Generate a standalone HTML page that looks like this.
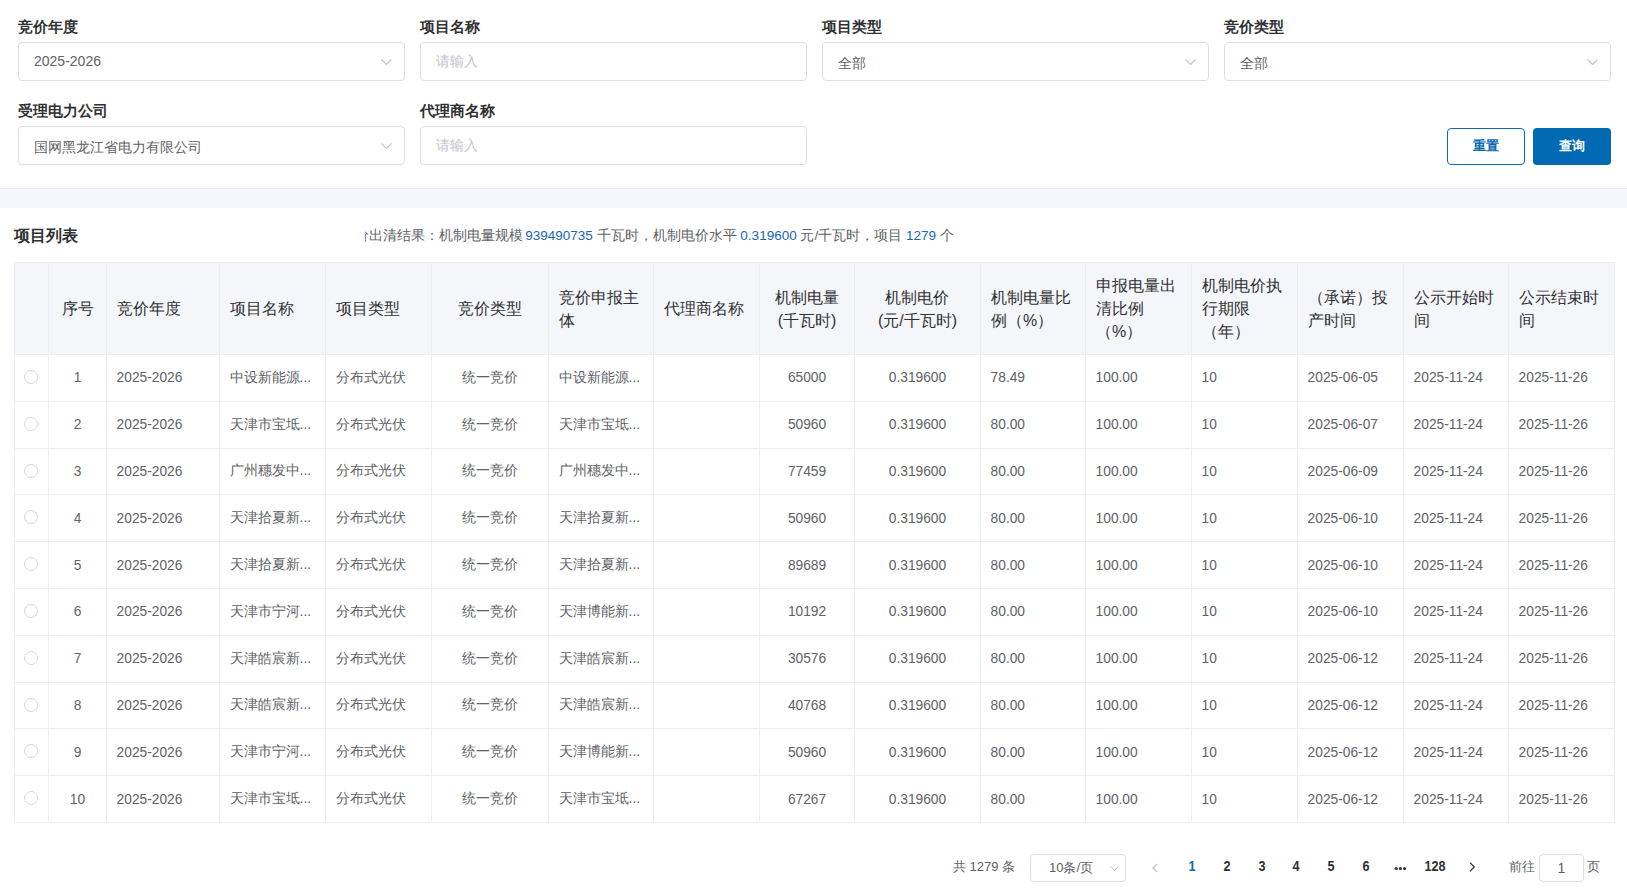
<!DOCTYPE html><html><head><meta charset="utf-8"><style>
*{box-sizing:border-box}
html,body{margin:0;padding:0;background:#fff;width:1627px;height:890px;overflow:hidden}
body{font-family:"Liberation Sans",sans-serif;color:#606266;position:relative}
.abs{position:absolute}
.lbl{position:absolute;font-size:14.5px;font-weight:bold;color:#303133;line-height:20px;white-space:nowrap}
.box{position:absolute;border:1px solid #dcdfe6;border-radius:4px;background:#fff;height:39px;width:387px}
.box .t{position:absolute;left:15px;top:0;line-height:37px;font-size:14px;color:#606266;white-space:nowrap}
.box .ph{color:#c0c4cc}
.box .cj{top:2px;font-size:13.6px}
.arrow{position:absolute;left:362.2px;top:16.4px;width:11px;height:6px}
.btn{position:absolute;top:128px;height:37px;width:78px;border-radius:4px;font-size:13.3px;font-weight:bold;text-align:center;line-height:33px}
.strip{position:absolute;left:0;top:188px;width:1627px;height:20px;background:#f4f7fc;border-top:1px solid #e8eff8}
.title{position:absolute;left:14px;top:226px;font-size:16px;font-weight:bold;color:#303133;line-height:20px}
.sumwrap{position:absolute;left:365px;top:227px;width:1000px;height:20px;overflow:hidden}
.sum{position:absolute;left:-24px;top:0;font-size:13.5px;line-height:18px;color:#606266;white-space:nowrap}
.sum b{font-weight:normal;color:#1c65b0}
.tbl{position:absolute;left:0;top:0}
.hbg{position:absolute;background:#f5f6fa}
.vl{position:absolute;width:1px;background:#ebeef5}
.hl{position:absolute;height:1px;background:#ebeef5}
.cell{position:absolute;display:flex;align-items:center;overflow:hidden}
.cell.c{justify-content:center;text-align:center}
.cell.l{justify-content:flex-start;text-align:left}
.hd{font-size:16px;color:#303133;line-height:23px}
.bd{font-size:13.75px;color:#606266;white-space:nowrap}
.radio{position:absolute;width:14px;height:14px;border:1px solid #d5d8df;border-radius:50%;background:#fff}
.pg{position:absolute;top:853px;font-size:13px;line-height:26px;white-space:nowrap}
</style></head><body>
<div class="lbl" style="left:18px;top:17px">竞价年度</div>
<div class="lbl" style="left:420px;top:17px">项目名称</div>
<div class="lbl" style="left:822px;top:17px">项目类型</div>
<div class="lbl" style="left:1224px;top:17px">竞价类型</div>
<div class="box" style="left:18px;top:42px"><span class="t">2025-2026</span><svg class="arrow" viewBox="0 0 11 6"><path d="M0.5 0.5 L5.5 5.5 L10.5 0.5" fill="none" stroke="#c0c4cc" stroke-width="1.1"/></svg></div>
<div class="box" style="left:420px;top:42px"><span class="t ph">请输入</span></div>
<div class="box" style="left:822px;top:42px"><span class="t cj">全部</span><svg class="arrow" viewBox="0 0 11 6"><path d="M0.5 0.5 L5.5 5.5 L10.5 0.5" fill="none" stroke="#c0c4cc" stroke-width="1.1"/></svg></div>
<div class="box" style="left:1224px;top:42px"><span class="t cj">全部</span><svg class="arrow" viewBox="0 0 11 6"><path d="M0.5 0.5 L5.5 5.5 L10.5 0.5" fill="none" stroke="#c0c4cc" stroke-width="1.1"/></svg></div>
<div class="lbl" style="left:18px;top:101px">受理电力公司</div>
<div class="lbl" style="left:420px;top:101px">代理商名称</div>
<div class="box" style="left:18px;top:126px"><span class="t cj">国网黑龙江省电力有限公司</span><svg class="arrow" viewBox="0 0 11 6"><path d="M0.5 0.5 L5.5 5.5 L10.5 0.5" fill="none" stroke="#c0c4cc" stroke-width="1.1"/></svg></div>
<div class="box" style="left:420px;top:126px"><span class="t ph">请输入</span></div>
<div class="btn" style="left:1447px;border:1px solid #0a6ab3;color:#0a6ab3;background:#fff">重置</div>
<div class="btn" style="left:1533px;background:#016ab3;color:#fff;line-height:35px">查询</div>
<div class="strip"></div>
<div class="title">项目列表</div>
<div class="sumwrap"><div class="sum"><span style="word-spacing:-1.5px">竞价出清结果：机制电量规模 </span><b>939490735</b> 千瓦时，机制电价水平 <b>0.319600</b> 元/千瓦时，项目 <b>1279</b> 个</div></div>
<div class="hbg" style="left:14px;top:262px;width:1600px;height:92px"></div>
<div class="hl" style="left:14px;top:262.00px;width:1601px"></div>
<div class="hl" style="left:14px;top:354.00px;width:1601px"></div>
<div class="hl" style="left:14px;top:400.80px;width:1601px"></div>
<div class="hl" style="left:14px;top:447.60px;width:1601px"></div>
<div class="hl" style="left:14px;top:494.40px;width:1601px"></div>
<div class="hl" style="left:14px;top:541.20px;width:1601px"></div>
<div class="hl" style="left:14px;top:588.00px;width:1601px"></div>
<div class="hl" style="left:14px;top:634.80px;width:1601px"></div>
<div class="hl" style="left:14px;top:681.60px;width:1601px"></div>
<div class="hl" style="left:14px;top:728.40px;width:1601px"></div>
<div class="hl" style="left:14px;top:775.20px;width:1601px"></div>
<div class="hl" style="left:14px;top:822.00px;width:1601px"></div>
<div class="vl" style="left:14px;top:262px;height:561.00px"></div>
<div class="vl" style="left:48px;top:262px;height:561.00px"></div>
<div class="vl" style="left:106px;top:262px;height:561.00px"></div>
<div class="vl" style="left:219px;top:262px;height:561.00px"></div>
<div class="vl" style="left:325px;top:262px;height:561.00px"></div>
<div class="vl" style="left:431px;top:262px;height:561.00px"></div>
<div class="vl" style="left:548px;top:262px;height:561.00px"></div>
<div class="vl" style="left:653px;top:262px;height:561.00px"></div>
<div class="vl" style="left:759px;top:262px;height:561.00px"></div>
<div class="vl" style="left:854px;top:262px;height:561.00px"></div>
<div class="vl" style="left:980px;top:262px;height:561.00px"></div>
<div class="vl" style="left:1085px;top:262px;height:561.00px"></div>
<div class="vl" style="left:1191px;top:262px;height:561.00px"></div>
<div class="vl" style="left:1297px;top:262px;height:561.00px"></div>
<div class="vl" style="left:1403px;top:262px;height:561.00px"></div>
<div class="vl" style="left:1508px;top:262px;height:561.00px"></div>
<div class="vl" style="left:1614px;top:262px;height:561.00px"></div>
<div class="cell hd c" style="left:15px;top:263px;width:33px;height:91px;padding:0 4px"><div></div></div>
<div class="cell hd c" style="left:49px;top:263px;width:57px;height:91px;padding:0 4px"><div>序号</div></div>
<div class="cell hd l" style="left:107px;top:263px;width:112px;height:91px;padding:0 10px"><div>竞价年度</div></div>
<div class="cell hd l" style="left:220px;top:263px;width:105px;height:91px;padding:0 10px"><div>项目名称</div></div>
<div class="cell hd l" style="left:326px;top:263px;width:105px;height:91px;padding:0 10px"><div>项目类型</div></div>
<div class="cell hd c" style="left:432px;top:263px;width:116px;height:91px;padding:0 4px"><div>竞价类型</div></div>
<div class="cell hd l" style="left:549px;top:263px;width:104px;height:91px;padding:0 10px"><div>竞价申报主体</div></div>
<div class="cell hd l" style="left:654px;top:263px;width:105px;height:91px;padding:0 10px"><div>代理商名称</div></div>
<div class="cell hd c" style="left:760px;top:263px;width:94px;height:91px;padding:0 4px"><div>机制电量<br>(千瓦时)</div></div>
<div class="cell hd c" style="left:855px;top:263px;width:125px;height:91px;padding:0 4px"><div>机制电价<br>(元/千瓦时)</div></div>
<div class="cell hd l" style="left:981px;top:263px;width:104px;height:91px;padding:0 10px"><div>机制电量比例（%）</div></div>
<div class="cell hd l" style="left:1086px;top:263px;width:105px;height:91px;padding:0 10px"><div>申报电量出清比例（%）</div></div>
<div class="cell hd l" style="left:1192px;top:263px;width:105px;height:91px;padding:0 10px"><div>机制电价执行期限（年）</div></div>
<div class="cell hd l" style="left:1298px;top:263px;width:105px;height:91px;padding:0 10px"><div>（承诺）投产时间</div></div>
<div class="cell hd l" style="left:1404px;top:263px;width:104px;height:91px;padding:0 10px"><div>公示开始时间</div></div>
<div class="cell hd l" style="left:1509px;top:263px;width:105px;height:91px;padding:0 10px"><div>公示结束时间</div></div>
<div class="radio" style="left:24px;top:369.90px"></div>
<div class="cell bd c" style="left:49px;top:355.00px;width:57px;height:45.80px;padding:0 4px">1</div>
<div class="cell bd l" style="left:107px;top:355.00px;width:112px;height:45.80px;padding:0 9.6px">2025-2026</div>
<div class="cell bd l" style="left:220px;top:355.00px;width:105px;height:45.80px;padding:0 9.6px">中设新能源...</div>
<div class="cell bd l" style="left:326px;top:355.00px;width:105px;height:45.80px;padding:0 9.6px">分布式光伏</div>
<div class="cell bd c" style="left:432px;top:355.00px;width:116px;height:45.80px;padding:0 4px">统一竞价</div>
<div class="cell bd l" style="left:549px;top:355.00px;width:104px;height:45.80px;padding:0 9.6px">中设新能源...</div>
<div class="cell bd l" style="left:654px;top:355.00px;width:105px;height:45.80px;padding:0 9.6px"></div>
<div class="cell bd c" style="left:760px;top:355.00px;width:94px;height:45.80px;padding:0 4px">65000</div>
<div class="cell bd c" style="left:855px;top:355.00px;width:125px;height:45.80px;padding:0 4px">0.319600</div>
<div class="cell bd l" style="left:981px;top:355.00px;width:104px;height:45.80px;padding:0 9.6px">78.49</div>
<div class="cell bd l" style="left:1086px;top:355.00px;width:105px;height:45.80px;padding:0 9.6px">100.00</div>
<div class="cell bd l" style="left:1192px;top:355.00px;width:105px;height:45.80px;padding:0 9.6px">10</div>
<div class="cell bd l" style="left:1298px;top:355.00px;width:105px;height:45.80px;padding:0 9.6px">2025-06-05</div>
<div class="cell bd l" style="left:1404px;top:355.00px;width:104px;height:45.80px;padding:0 9.6px">2025-11-24</div>
<div class="cell bd l" style="left:1509px;top:355.00px;width:105px;height:45.80px;padding:0 9.6px">2025-11-26</div>
<div class="radio" style="left:24px;top:416.70px"></div>
<div class="cell bd c" style="left:49px;top:401.80px;width:57px;height:45.80px;padding:0 4px">2</div>
<div class="cell bd l" style="left:107px;top:401.80px;width:112px;height:45.80px;padding:0 9.6px">2025-2026</div>
<div class="cell bd l" style="left:220px;top:401.80px;width:105px;height:45.80px;padding:0 9.6px">天津市宝坻...</div>
<div class="cell bd l" style="left:326px;top:401.80px;width:105px;height:45.80px;padding:0 9.6px">分布式光伏</div>
<div class="cell bd c" style="left:432px;top:401.80px;width:116px;height:45.80px;padding:0 4px">统一竞价</div>
<div class="cell bd l" style="left:549px;top:401.80px;width:104px;height:45.80px;padding:0 9.6px">天津市宝坻...</div>
<div class="cell bd l" style="left:654px;top:401.80px;width:105px;height:45.80px;padding:0 9.6px"></div>
<div class="cell bd c" style="left:760px;top:401.80px;width:94px;height:45.80px;padding:0 4px">50960</div>
<div class="cell bd c" style="left:855px;top:401.80px;width:125px;height:45.80px;padding:0 4px">0.319600</div>
<div class="cell bd l" style="left:981px;top:401.80px;width:104px;height:45.80px;padding:0 9.6px">80.00</div>
<div class="cell bd l" style="left:1086px;top:401.80px;width:105px;height:45.80px;padding:0 9.6px">100.00</div>
<div class="cell bd l" style="left:1192px;top:401.80px;width:105px;height:45.80px;padding:0 9.6px">10</div>
<div class="cell bd l" style="left:1298px;top:401.80px;width:105px;height:45.80px;padding:0 9.6px">2025-06-07</div>
<div class="cell bd l" style="left:1404px;top:401.80px;width:104px;height:45.80px;padding:0 9.6px">2025-11-24</div>
<div class="cell bd l" style="left:1509px;top:401.80px;width:105px;height:45.80px;padding:0 9.6px">2025-11-26</div>
<div class="radio" style="left:24px;top:463.50px"></div>
<div class="cell bd c" style="left:49px;top:448.60px;width:57px;height:45.80px;padding:0 4px">3</div>
<div class="cell bd l" style="left:107px;top:448.60px;width:112px;height:45.80px;padding:0 9.6px">2025-2026</div>
<div class="cell bd l" style="left:220px;top:448.60px;width:105px;height:45.80px;padding:0 9.6px">广州穗发中...</div>
<div class="cell bd l" style="left:326px;top:448.60px;width:105px;height:45.80px;padding:0 9.6px">分布式光伏</div>
<div class="cell bd c" style="left:432px;top:448.60px;width:116px;height:45.80px;padding:0 4px">统一竞价</div>
<div class="cell bd l" style="left:549px;top:448.60px;width:104px;height:45.80px;padding:0 9.6px">广州穗发中...</div>
<div class="cell bd l" style="left:654px;top:448.60px;width:105px;height:45.80px;padding:0 9.6px"></div>
<div class="cell bd c" style="left:760px;top:448.60px;width:94px;height:45.80px;padding:0 4px">77459</div>
<div class="cell bd c" style="left:855px;top:448.60px;width:125px;height:45.80px;padding:0 4px">0.319600</div>
<div class="cell bd l" style="left:981px;top:448.60px;width:104px;height:45.80px;padding:0 9.6px">80.00</div>
<div class="cell bd l" style="left:1086px;top:448.60px;width:105px;height:45.80px;padding:0 9.6px">100.00</div>
<div class="cell bd l" style="left:1192px;top:448.60px;width:105px;height:45.80px;padding:0 9.6px">10</div>
<div class="cell bd l" style="left:1298px;top:448.60px;width:105px;height:45.80px;padding:0 9.6px">2025-06-09</div>
<div class="cell bd l" style="left:1404px;top:448.60px;width:104px;height:45.80px;padding:0 9.6px">2025-11-24</div>
<div class="cell bd l" style="left:1509px;top:448.60px;width:105px;height:45.80px;padding:0 9.6px">2025-11-26</div>
<div class="radio" style="left:24px;top:510.30px"></div>
<div class="cell bd c" style="left:49px;top:495.40px;width:57px;height:45.80px;padding:0 4px">4</div>
<div class="cell bd l" style="left:107px;top:495.40px;width:112px;height:45.80px;padding:0 9.6px">2025-2026</div>
<div class="cell bd l" style="left:220px;top:495.40px;width:105px;height:45.80px;padding:0 9.6px">天津拾夏新...</div>
<div class="cell bd l" style="left:326px;top:495.40px;width:105px;height:45.80px;padding:0 9.6px">分布式光伏</div>
<div class="cell bd c" style="left:432px;top:495.40px;width:116px;height:45.80px;padding:0 4px">统一竞价</div>
<div class="cell bd l" style="left:549px;top:495.40px;width:104px;height:45.80px;padding:0 9.6px">天津拾夏新...</div>
<div class="cell bd l" style="left:654px;top:495.40px;width:105px;height:45.80px;padding:0 9.6px"></div>
<div class="cell bd c" style="left:760px;top:495.40px;width:94px;height:45.80px;padding:0 4px">50960</div>
<div class="cell bd c" style="left:855px;top:495.40px;width:125px;height:45.80px;padding:0 4px">0.319600</div>
<div class="cell bd l" style="left:981px;top:495.40px;width:104px;height:45.80px;padding:0 9.6px">80.00</div>
<div class="cell bd l" style="left:1086px;top:495.40px;width:105px;height:45.80px;padding:0 9.6px">100.00</div>
<div class="cell bd l" style="left:1192px;top:495.40px;width:105px;height:45.80px;padding:0 9.6px">10</div>
<div class="cell bd l" style="left:1298px;top:495.40px;width:105px;height:45.80px;padding:0 9.6px">2025-06-10</div>
<div class="cell bd l" style="left:1404px;top:495.40px;width:104px;height:45.80px;padding:0 9.6px">2025-11-24</div>
<div class="cell bd l" style="left:1509px;top:495.40px;width:105px;height:45.80px;padding:0 9.6px">2025-11-26</div>
<div class="radio" style="left:24px;top:557.10px"></div>
<div class="cell bd c" style="left:49px;top:542.20px;width:57px;height:45.80px;padding:0 4px">5</div>
<div class="cell bd l" style="left:107px;top:542.20px;width:112px;height:45.80px;padding:0 9.6px">2025-2026</div>
<div class="cell bd l" style="left:220px;top:542.20px;width:105px;height:45.80px;padding:0 9.6px">天津拾夏新...</div>
<div class="cell bd l" style="left:326px;top:542.20px;width:105px;height:45.80px;padding:0 9.6px">分布式光伏</div>
<div class="cell bd c" style="left:432px;top:542.20px;width:116px;height:45.80px;padding:0 4px">统一竞价</div>
<div class="cell bd l" style="left:549px;top:542.20px;width:104px;height:45.80px;padding:0 9.6px">天津拾夏新...</div>
<div class="cell bd l" style="left:654px;top:542.20px;width:105px;height:45.80px;padding:0 9.6px"></div>
<div class="cell bd c" style="left:760px;top:542.20px;width:94px;height:45.80px;padding:0 4px">89689</div>
<div class="cell bd c" style="left:855px;top:542.20px;width:125px;height:45.80px;padding:0 4px">0.319600</div>
<div class="cell bd l" style="left:981px;top:542.20px;width:104px;height:45.80px;padding:0 9.6px">80.00</div>
<div class="cell bd l" style="left:1086px;top:542.20px;width:105px;height:45.80px;padding:0 9.6px">100.00</div>
<div class="cell bd l" style="left:1192px;top:542.20px;width:105px;height:45.80px;padding:0 9.6px">10</div>
<div class="cell bd l" style="left:1298px;top:542.20px;width:105px;height:45.80px;padding:0 9.6px">2025-06-10</div>
<div class="cell bd l" style="left:1404px;top:542.20px;width:104px;height:45.80px;padding:0 9.6px">2025-11-24</div>
<div class="cell bd l" style="left:1509px;top:542.20px;width:105px;height:45.80px;padding:0 9.6px">2025-11-26</div>
<div class="radio" style="left:24px;top:603.90px"></div>
<div class="cell bd c" style="left:49px;top:589.00px;width:57px;height:45.80px;padding:0 4px">6</div>
<div class="cell bd l" style="left:107px;top:589.00px;width:112px;height:45.80px;padding:0 9.6px">2025-2026</div>
<div class="cell bd l" style="left:220px;top:589.00px;width:105px;height:45.80px;padding:0 9.6px">天津市宁河...</div>
<div class="cell bd l" style="left:326px;top:589.00px;width:105px;height:45.80px;padding:0 9.6px">分布式光伏</div>
<div class="cell bd c" style="left:432px;top:589.00px;width:116px;height:45.80px;padding:0 4px">统一竞价</div>
<div class="cell bd l" style="left:549px;top:589.00px;width:104px;height:45.80px;padding:0 9.6px">天津博能新...</div>
<div class="cell bd l" style="left:654px;top:589.00px;width:105px;height:45.80px;padding:0 9.6px"></div>
<div class="cell bd c" style="left:760px;top:589.00px;width:94px;height:45.80px;padding:0 4px">10192</div>
<div class="cell bd c" style="left:855px;top:589.00px;width:125px;height:45.80px;padding:0 4px">0.319600</div>
<div class="cell bd l" style="left:981px;top:589.00px;width:104px;height:45.80px;padding:0 9.6px">80.00</div>
<div class="cell bd l" style="left:1086px;top:589.00px;width:105px;height:45.80px;padding:0 9.6px">100.00</div>
<div class="cell bd l" style="left:1192px;top:589.00px;width:105px;height:45.80px;padding:0 9.6px">10</div>
<div class="cell bd l" style="left:1298px;top:589.00px;width:105px;height:45.80px;padding:0 9.6px">2025-06-10</div>
<div class="cell bd l" style="left:1404px;top:589.00px;width:104px;height:45.80px;padding:0 9.6px">2025-11-24</div>
<div class="cell bd l" style="left:1509px;top:589.00px;width:105px;height:45.80px;padding:0 9.6px">2025-11-26</div>
<div class="radio" style="left:24px;top:650.70px"></div>
<div class="cell bd c" style="left:49px;top:635.80px;width:57px;height:45.80px;padding:0 4px">7</div>
<div class="cell bd l" style="left:107px;top:635.80px;width:112px;height:45.80px;padding:0 9.6px">2025-2026</div>
<div class="cell bd l" style="left:220px;top:635.80px;width:105px;height:45.80px;padding:0 9.6px">天津皓宸新...</div>
<div class="cell bd l" style="left:326px;top:635.80px;width:105px;height:45.80px;padding:0 9.6px">分布式光伏</div>
<div class="cell bd c" style="left:432px;top:635.80px;width:116px;height:45.80px;padding:0 4px">统一竞价</div>
<div class="cell bd l" style="left:549px;top:635.80px;width:104px;height:45.80px;padding:0 9.6px">天津皓宸新...</div>
<div class="cell bd l" style="left:654px;top:635.80px;width:105px;height:45.80px;padding:0 9.6px"></div>
<div class="cell bd c" style="left:760px;top:635.80px;width:94px;height:45.80px;padding:0 4px">30576</div>
<div class="cell bd c" style="left:855px;top:635.80px;width:125px;height:45.80px;padding:0 4px">0.319600</div>
<div class="cell bd l" style="left:981px;top:635.80px;width:104px;height:45.80px;padding:0 9.6px">80.00</div>
<div class="cell bd l" style="left:1086px;top:635.80px;width:105px;height:45.80px;padding:0 9.6px">100.00</div>
<div class="cell bd l" style="left:1192px;top:635.80px;width:105px;height:45.80px;padding:0 9.6px">10</div>
<div class="cell bd l" style="left:1298px;top:635.80px;width:105px;height:45.80px;padding:0 9.6px">2025-06-12</div>
<div class="cell bd l" style="left:1404px;top:635.80px;width:104px;height:45.80px;padding:0 9.6px">2025-11-24</div>
<div class="cell bd l" style="left:1509px;top:635.80px;width:105px;height:45.80px;padding:0 9.6px">2025-11-26</div>
<div class="radio" style="left:24px;top:697.50px"></div>
<div class="cell bd c" style="left:49px;top:682.60px;width:57px;height:45.80px;padding:0 4px">8</div>
<div class="cell bd l" style="left:107px;top:682.60px;width:112px;height:45.80px;padding:0 9.6px">2025-2026</div>
<div class="cell bd l" style="left:220px;top:682.60px;width:105px;height:45.80px;padding:0 9.6px">天津皓宸新...</div>
<div class="cell bd l" style="left:326px;top:682.60px;width:105px;height:45.80px;padding:0 9.6px">分布式光伏</div>
<div class="cell bd c" style="left:432px;top:682.60px;width:116px;height:45.80px;padding:0 4px">统一竞价</div>
<div class="cell bd l" style="left:549px;top:682.60px;width:104px;height:45.80px;padding:0 9.6px">天津皓宸新...</div>
<div class="cell bd l" style="left:654px;top:682.60px;width:105px;height:45.80px;padding:0 9.6px"></div>
<div class="cell bd c" style="left:760px;top:682.60px;width:94px;height:45.80px;padding:0 4px">40768</div>
<div class="cell bd c" style="left:855px;top:682.60px;width:125px;height:45.80px;padding:0 4px">0.319600</div>
<div class="cell bd l" style="left:981px;top:682.60px;width:104px;height:45.80px;padding:0 9.6px">80.00</div>
<div class="cell bd l" style="left:1086px;top:682.60px;width:105px;height:45.80px;padding:0 9.6px">100.00</div>
<div class="cell bd l" style="left:1192px;top:682.60px;width:105px;height:45.80px;padding:0 9.6px">10</div>
<div class="cell bd l" style="left:1298px;top:682.60px;width:105px;height:45.80px;padding:0 9.6px">2025-06-12</div>
<div class="cell bd l" style="left:1404px;top:682.60px;width:104px;height:45.80px;padding:0 9.6px">2025-11-24</div>
<div class="cell bd l" style="left:1509px;top:682.60px;width:105px;height:45.80px;padding:0 9.6px">2025-11-26</div>
<div class="radio" style="left:24px;top:744.30px"></div>
<div class="cell bd c" style="left:49px;top:729.40px;width:57px;height:45.80px;padding:0 4px">9</div>
<div class="cell bd l" style="left:107px;top:729.40px;width:112px;height:45.80px;padding:0 9.6px">2025-2026</div>
<div class="cell bd l" style="left:220px;top:729.40px;width:105px;height:45.80px;padding:0 9.6px">天津市宁河...</div>
<div class="cell bd l" style="left:326px;top:729.40px;width:105px;height:45.80px;padding:0 9.6px">分布式光伏</div>
<div class="cell bd c" style="left:432px;top:729.40px;width:116px;height:45.80px;padding:0 4px">统一竞价</div>
<div class="cell bd l" style="left:549px;top:729.40px;width:104px;height:45.80px;padding:0 9.6px">天津博能新...</div>
<div class="cell bd l" style="left:654px;top:729.40px;width:105px;height:45.80px;padding:0 9.6px"></div>
<div class="cell bd c" style="left:760px;top:729.40px;width:94px;height:45.80px;padding:0 4px">50960</div>
<div class="cell bd c" style="left:855px;top:729.40px;width:125px;height:45.80px;padding:0 4px">0.319600</div>
<div class="cell bd l" style="left:981px;top:729.40px;width:104px;height:45.80px;padding:0 9.6px">80.00</div>
<div class="cell bd l" style="left:1086px;top:729.40px;width:105px;height:45.80px;padding:0 9.6px">100.00</div>
<div class="cell bd l" style="left:1192px;top:729.40px;width:105px;height:45.80px;padding:0 9.6px">10</div>
<div class="cell bd l" style="left:1298px;top:729.40px;width:105px;height:45.80px;padding:0 9.6px">2025-06-12</div>
<div class="cell bd l" style="left:1404px;top:729.40px;width:104px;height:45.80px;padding:0 9.6px">2025-11-24</div>
<div class="cell bd l" style="left:1509px;top:729.40px;width:105px;height:45.80px;padding:0 9.6px">2025-11-26</div>
<div class="radio" style="left:24px;top:791.10px"></div>
<div class="cell bd c" style="left:49px;top:776.20px;width:57px;height:45.80px;padding:0 4px">10</div>
<div class="cell bd l" style="left:107px;top:776.20px;width:112px;height:45.80px;padding:0 9.6px">2025-2026</div>
<div class="cell bd l" style="left:220px;top:776.20px;width:105px;height:45.80px;padding:0 9.6px">天津市宝坻...</div>
<div class="cell bd l" style="left:326px;top:776.20px;width:105px;height:45.80px;padding:0 9.6px">分布式光伏</div>
<div class="cell bd c" style="left:432px;top:776.20px;width:116px;height:45.80px;padding:0 4px">统一竞价</div>
<div class="cell bd l" style="left:549px;top:776.20px;width:104px;height:45.80px;padding:0 9.6px">天津市宝坻...</div>
<div class="cell bd l" style="left:654px;top:776.20px;width:105px;height:45.80px;padding:0 9.6px"></div>
<div class="cell bd c" style="left:760px;top:776.20px;width:94px;height:45.80px;padding:0 4px">67267</div>
<div class="cell bd c" style="left:855px;top:776.20px;width:125px;height:45.80px;padding:0 4px">0.319600</div>
<div class="cell bd l" style="left:981px;top:776.20px;width:104px;height:45.80px;padding:0 9.6px">80.00</div>
<div class="cell bd l" style="left:1086px;top:776.20px;width:105px;height:45.80px;padding:0 9.6px">100.00</div>
<div class="cell bd l" style="left:1192px;top:776.20px;width:105px;height:45.80px;padding:0 9.6px">10</div>
<div class="cell bd l" style="left:1298px;top:776.20px;width:105px;height:45.80px;padding:0 9.6px">2025-06-12</div>
<div class="cell bd l" style="left:1404px;top:776.20px;width:104px;height:45.80px;padding:0 9.6px">2025-11-24</div>
<div class="cell bd l" style="left:1509px;top:776.20px;width:105px;height:45.80px;padding:0 9.6px">2025-11-26</div>
<div class="pg" style="left:953px;top:854px;color:#606266">共 1279 条</div>
<div class="box" style="left:1030px;top:854px;width:96px;height:28px"><span class="t" style="left:18px;line-height:26px;font-size:13px">10条/页</span><svg class="arrow" style="left:78.5px;top:11px;width:9px;height:5px" viewBox="0 0 9 5"><path d="M0.5 0.5 L4.5 4.5 L8.5 0.5" fill="none" stroke="#c0c4cc" stroke-width="1"/></svg></div>
<svg class="abs" style="left:1151px;top:863px" width="8" height="10" viewBox="0 0 8 10"><path d="M6 1 L2 5 L6 9" fill="none" stroke="#c0c4cc" stroke-width="1.3"/></svg>
<svg class="abs" style="left:1394px;top:866px" width="13" height="5" viewBox="0 0 13 5"><circle cx="2.2" cy="2.5" r="1.6" fill="#303133"/><circle cx="6.4" cy="2.5" r="1.6" fill="#303133"/><circle cx="10.6" cy="2.5" r="1.6" fill="#303133"/></svg>
<div class="pg" style="left:1172px;width:40px;text-align:center;font-weight:bold;color:#0a6ab3;font-size:14px;transform:scaleX(0.9)">1</div>
<div class="pg" style="left:1207px;width:40px;text-align:center;font-weight:bold;color:#303133;font-size:14px;transform:scaleX(0.9)">2</div>
<div class="pg" style="left:1241.5px;width:40px;text-align:center;font-weight:bold;color:#303133;font-size:14px;transform:scaleX(0.9)">3</div>
<div class="pg" style="left:1276px;width:40px;text-align:center;font-weight:bold;color:#303133;font-size:14px;transform:scaleX(0.9)">4</div>
<div class="pg" style="left:1311px;width:40px;text-align:center;font-weight:bold;color:#303133;font-size:14px;transform:scaleX(0.9)">5</div>
<div class="pg" style="left:1345.5px;width:40px;text-align:center;font-weight:bold;color:#303133;font-size:14px;transform:scaleX(0.9)">6</div>
<div class="pg" style="left:1415px;width:40px;text-align:center;font-weight:bold;color:#303133;font-size:14px;transform:scaleX(0.9)">128</div>
<svg class="abs" style="left:1469px;top:862px" width="7" height="10" viewBox="0 0 7 10"><path d="M1 0.8 L5.3 5 L1 9.2" fill="none" stroke="#303133" stroke-width="1.2"/></svg>
<div class="pg" style="left:1509px;top:854px;color:#606266">前往</div>
<div class="box" style="left:1539px;top:854px;width:45px;height:28px"><span class="t" style="left:0;width:43px;text-align:center;line-height:26px">1</span></div>
<div class="pg" style="left:1587px;top:854px;color:#606266">页</div>
</body></html>
